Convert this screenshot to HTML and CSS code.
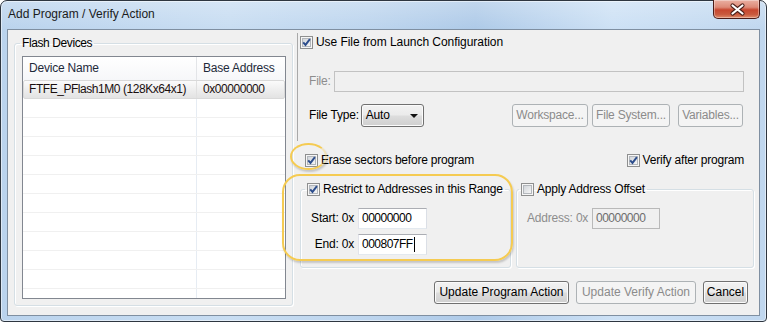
FILE: index.html
```html
<!DOCTYPE html>
<html lang="en">
<head>
    <meta charset="UTF-8">
    <title>Add Program / Verify Action</title>
    <link rel="stylesheet" href="styles.css">
</head>
<body>
    <svg class="defs" width="0" height="0">
        <defs>
            <linearGradient id="cb-fill" x1="0" y1="0" x2="1" y2="1">
                <stop offset="0" stop-color="#cfd3d8"/>
                <stop offset="1" stop-color="#f8f8f8"/>
            </linearGradient>
            <g id="cb-box">
                <rect x="0.5" y="0.5" width="12" height="12" fill="#f6f6f6" stroke="#8e8f8f"/>
                <rect x="2.5" y="2.5" width="8" height="8" fill="url(#cb-fill)" stroke="#b3b7bc"/>
            </g>
            <path id="cb-check" d="M3.2 6.3 L5.5 8.9 L9.9 3.1" fill="none" stroke="#2c4d8c" stroke-width="1.9"/>
        </defs>
    </svg>

    <div class="window">
        <div class="titlebar">
            <span class="title">Add Program / Verify Action</span>
            <div class="close-btn">
                <svg width="47" height="19" viewBox="0 0 47 19">
                    <path d="M19.5 5.5 L29.5 13.5 M29.5 5.5 L19.5 13.5" stroke="#4a1e18" stroke-width="4.2" stroke-linecap="round"/>
                    <path d="M19.5 5.5 L29.5 13.5 M29.5 5.5 L19.5 13.5" stroke="#ffffff" stroke-width="2.2" stroke-linecap="round"/>
                </svg>
            </div>
        </div>

        <div class="client">
            <!-- lista de dispositivos -->
            <fieldset class="group devices">
                <legend>Flash Devices</legend>
                <div class="list">
                    <div class="list-head">
                        <div class="col-name">Device Name</div>
                        <div class="col-addr">Base Address</div>
                    </div>
                    <div class="list-row selected">
                        <div class="col-name">FTFE_PFlash1M0 (128Kx64x1)</div>
                        <div class="col-addr">0x00000000</div>
                    </div>
                    <div class="list-row"><div class="col-name"></div><div class="col-addr"></div></div>
                    <div class="list-row"><div class="col-name"></div><div class="col-addr"></div></div>
                    <div class="list-row"><div class="col-name"></div><div class="col-addr"></div></div>
                    <div class="list-row"><div class="col-name"></div><div class="col-addr"></div></div>
                    <div class="list-row"><div class="col-name"></div><div class="col-addr"></div></div>
                    <div class="list-row"><div class="col-name"></div><div class="col-addr"></div></div>
                    <div class="list-row"><div class="col-name"></div><div class="col-addr"></div></div>
                    <div class="list-row"><div class="col-name"></div><div class="col-addr"></div></div>
                    <div class="list-row"><div class="col-name"></div><div class="col-addr"></div></div>
                    <div class="list-row"><div class="col-name"></div><div class="col-addr"></div></div>
                    <div class="list-row"><div class="col-name"></div><div class="col-addr"></div></div>
                </div>
            </fieldset>

            <!-- opcoes da accao -->
            <div class="panel">
                <div class="top-section">
                    <div class="row row-usefile">
                        <svg class="cb" viewBox="0 0 13 13"><use href="#cb-box"/><use href="#cb-check"/></svg>
                        <span class="cb-label">Use File from Launch Configuration</span>
                    </div>

                    <div class="row row-file">
                        <span class="label disabled">File:</span>
                        <div class="field field-file disabled"></div>
                    </div>

                    <div class="row row-type">
                        <span class="label">File Type:</span>
                        <div class="combo">
                            <span>Auto</span>
                            <span class="arrow"></span>
                        </div>
                        <div class="btn disabled btn-ws">Workspace...</div>
                        <div class="btn disabled btn-fs">File System...</div>
                        <div class="btn disabled btn-var">Variables...</div>
                    </div>
                </div>

                <div class="row row-checks">
                    <svg class="cb" viewBox="0 0 13 13"><use href="#cb-box"/><use href="#cb-check"/></svg>
                    <span class="cb-label">Erase sectors before program</span>
                    <span class="spacer"></span>
                    <svg class="cb" viewBox="0 0 13 13"><use href="#cb-box"/><use href="#cb-check"/></svg>
                    <span class="cb-label">Verify after program</span>
                </div>

                <div class="row row-groups">
                    <fieldset class="group range">
                        <legend>
                            <svg class="cb" viewBox="0 0 13 13"><use href="#cb-box"/><use href="#cb-check"/></svg>
                            <span class="cb-label">Restrict to Addresses in this Range</span>
                        </legend>
                        <div class="addr-grid">
                            <span class="addr-label">Start: 0x</span>
                            <div class="field field-addr">00000000</div>
                            <span class="addr-label">End: 0x</span>
                            <div class="field field-addr">000807FF<span class="caret"></span></div>
                        </div>
                    </fieldset>

                    <fieldset class="group offset">
                        <legend>
                            <svg class="cb" viewBox="0 0 13 13"><use href="#cb-box"/></svg>
                            <span class="cb-label">Apply Address Offset</span>
                        </legend>
                        <div class="offset-row">
                            <span class="label disabled offset-label">Address: 0x</span>
                            <div class="field field-addr disabled">00000000</div>
                        </div>
                    </fieldset>
                </div>

                <div class="row row-actions">
                    <div class="btn btn-program">Update Program Action</div>
                    <div class="btn disabled btn-verify">Update Verify Action</div>
                    <div class="btn btn-cancel">Cancel</div>
                </div>
            </div>
        </div>

        <!-- marcacoes amarelas -->
        <div class="mark mark-erase"></div>
        <div class="mark mark-range"></div>
    </div>
</body>
</html>
```

FILE: styles.css
```css
* {
    margin: 0;
    padding: 0;
    box-sizing: border-box;
}

body {
    width: 767px;
    height: 322px;
    overflow: hidden;
    background: #ffffff;
    font-family: "Liberation Sans", Arial, sans-serif;
    font-size: 12px;
    line-height: 15px;
    letter-spacing: -0.2px;
    color: #000;
}

.defs {
    position: absolute;
    width: 0;
    height: 0;
}

/* janela */
.window {
    position: relative;
    width: 767px;
    height: 322px;
    display: flex;
    flex-direction: column;
    border: 1px solid #2e3640;
    border-radius: 7px 7px 4px 4px;
    background:
        linear-gradient(180deg, rgba(255,255,255,0.25) 0px, rgba(255,255,255,0) 28px),
        linear-gradient(90deg, #bad3ed 0%, #c8ddf2 30%, #bdd5ee 48%, #aecae8 62%, #cde1f5 80%, #c0d7ef 100%);
    box-shadow: inset 0 0 0 1px rgba(255,255,255,0.5);
}

.titlebar {
    height: 28px;
    display: flex;
    align-items: flex-start;
    padding-left: 7px;
}

.title {
    margin-top: 6px;
    letter-spacing: 0;
    color: #1b1b1b;
}

.close-btn {
    margin-left: auto;
    margin-right: 6px;
    margin-top: -1px;
    width: 47px;
    height: 19px;
    border: 1px solid #4b1c18;
    border-top: none;
    border-radius: 0 0 5px 5px;
    background: linear-gradient(180deg, #eab0a2 0%, #dd8a77 40%, #c7472f 55%, #c95a3e 80%, #e08d6c 100%);
    box-shadow: inset 0 0 0 1px rgba(255,255,255,0.35);
}

.close-btn svg {
    display: block;
    margin-left: -1px;
}

.client {
    flex: 1;
    display: flex;
    margin: 0 6px 5px 6px;
    border: 1px solid #7f8fa1;
    background: #f0f0f0;
}

/* group boxes */
.group {
    border: 1px solid #d5dfe5;
    border-radius: 3px;
    box-shadow: inset 1px 1px 0 #ffffff, 1px 1px 0 #ffffff;
    min-width: 0;
}

.group legend {
    padding: 0 2px;
    line-height: 15px;
}

.devices {
    margin: 6px 0 0 6px;
    width: 279px;
    height: 270px;
    padding: 0 6px 0 7px;
}

.devices legend {
    margin-left: -2px;
    letter-spacing: -0.4px;
}

.list {
    margin-top: 5px;
    height: 243px;
    border: 1px solid #828790;
    background: #ffffff;
    overflow: hidden;
}

.list-head {
    display: flex;
    height: 23px;
    line-height: 23px;
    background: linear-gradient(180deg, #ffffff 0%, #f6f7f9 100%);
    color: #1e2a3a;
}

.list-head .col-name {
    border-right: 1px solid #e3e5e8;
}

.list-row {
    display: flex;
    height: 19px;
    line-height: 18px;
    border-bottom: 1px solid #f0f0f0;
}

.list-row.selected {
    background: linear-gradient(180deg, #fbfbfb 0%, #ececec 60%, #e3e3e3 100%);
    border: 1px solid #d9d9d9;
    border-radius: 2px;
    line-height: 17px;
    color: #1a0f0f;
    letter-spacing: -0.45px;
}

.col-name {
    width: 174px;
    padding-left: 6px;
    border-right: 1px solid #e6ecf3;
    white-space: nowrap;
    overflow: hidden;
}

.col-addr {
    flex: 1;
    padding-left: 6px;
    white-space: nowrap;
}

.list-row.selected .col-name {
    width: 173px;
    padding-left: 5px;
    border-right-color: #e0e0e0;
}

/* painel da direita */
.panel {
    flex: 1;
    display: flex;
    flex-direction: column;
    margin-left: 4px;
}

.top-section {
    margin-top: 3px;
    padding-bottom: 14px;
    border-left: 1px solid #a9a9a9;
}

.row {
    display: flex;
    align-items: center;
}

.cb {
    width: 13px;
    height: 13px;
    flex: none;
    display: block;
}

.cb-label {
    margin-left: 3px;
    white-space: nowrap;
}

.label {
    white-space: nowrap;
}

.disabled {
    color: #8d8d8d;
}

.row-usefile {
    margin-top: 2px;
    height: 15px;
    padding-left: 2px;
}

.row-usefile .cb-label {
    letter-spacing: -0.05px;
}

.row-file {
    margin-top: 21px;
    height: 21px;
    padding-left: 11px;
    padding-right: 15px;
}

.field {
    height: 21px;
    line-height: 19px;
    padding-left: 3px;
    background: #ffffff;
    border: 1px solid;
    border-color: #abadb3 #dbdfe6 #e3e9ef #e2e3ea;
    white-space: nowrap;
    letter-spacing: -0.5px;
}

.field.disabled {
    background: #f0f0f0;
    border-color: #c2c2c2;
    color: #6d6d6d;
}

.field-file {
    flex: 1;
    margin-left: 3px;
}

.row-type {
    margin-top: 12px;
    height: 23px;
    padding-left: 11px;
}

.combo {
    margin-left: 2px;
    width: 63px;
    height: 23px;
    display: flex;
    align-items: center;
    justify-content: space-between;
    padding: 0 5px 0 4px;
    border: 1px solid #707070;
    border-radius: 3px;
    background: linear-gradient(180deg, #f2f2f2 0%, #ebebeb 48%, #dddddd 52%, #cfcfcf 100%);
    box-shadow: inset 0 0 0 1px #fbfbfb;
}

.arrow {
    width: 0;
    height: 0;
    border-left: 4px solid transparent;
    border-right: 4px solid transparent;
    border-top: 4px solid #111;
}

.btn {
    height: 23px;
    display: flex;
    align-items: center;
    justify-content: center;
    border: 1px solid #707070;
    border-radius: 3px;
    background: linear-gradient(180deg, #f2f2f2 0%, #ebebeb 48%, #dddddd 52%, #cfcfcf 100%);
    box-shadow: inset 0 0 0 1px #fbfbfb;
    white-space: nowrap;
}

.btn.disabled {
    border-color: #adb2b5;
    background: #f4f4f4;
    box-shadow: none;
    color: #8b8b8b;
}

.btn-ws {
    margin-left: auto;
    width: 76px;
}

.btn-fs {
    margin-left: 4px;
    width: 78px;
}

.btn-var {
    margin-left: 8px;
    margin-right: 16px;
    width: 65px;
}

.row-checks {
    margin-top: 12px;
    height: 15px;
    padding-left: 8px;
    padding-right: 15px;
}

.spacer {
    flex: 1;
}

.row-groups {
    margin-top: 14px;
    align-items: flex-start;
}

.row-groups .group {
    height: 86px;
}

.row-groups legend {
    display: flex;
    align-items: center;
}

.range {
    margin-left: 3px;
    width: 211px;
    padding: 0 4px;
}

.addr-grid {
    margin-top: 11px;
    display: grid;
    grid-template-columns: 49px 69px;
    column-gap: 4px;
    row-gap: 5px;
    align-items: center;
}

.addr-label {
    text-align: right;
    white-space: nowrap;
}

.field-addr {
    height: 21px;
    width: 69px;
    display: flex;
    align-items: center;
}

.caret {
    width: 1px;
    height: 15px;
    background: #000;
    margin-left: 1px;
}

.offset {
    margin-left: 5px;
    width: 238px;
    padding: 0 2px;
}

.offset-row {
    margin-top: 11px;
    display: flex;
    align-items: center;
    padding-left: 8px;
}

.offset-label {
    width: 63px;
}

.offset .field-addr {
    margin-left: 2px;
    width: 68px;
    border-color: #b9b9b9;
}

.row-actions {
    margin-top: 13px;
    justify-content: flex-end;
    padding-right: 11px;
}

.row-actions .btn {
    letter-spacing: 0;
}

.btn-program {
    width: 135px;
}

.btn-verify {
    margin-left: 7px;
    width: 120px;
}

.btn-cancel {
    margin-left: 7px;
    width: 45px;
}

/* marcacoes amarelas por cima do dialogo */
.mark {
    position: absolute;
    border: 2px solid #f5cb52;
    box-shadow: 1px 2px 2px rgba(0,0,0,0.18);
}

.mark-erase {
    left: 289px;
    top: 142px;
    width: 37px;
    height: 27px;
    border-radius: 50%;
    border-right-color: rgba(245,203,82,0.35);
}

.mark-range {
    left: 281px;
    top: 173px;
    width: 231px;
    height: 87px;
    border-radius: 18px;
}
```
